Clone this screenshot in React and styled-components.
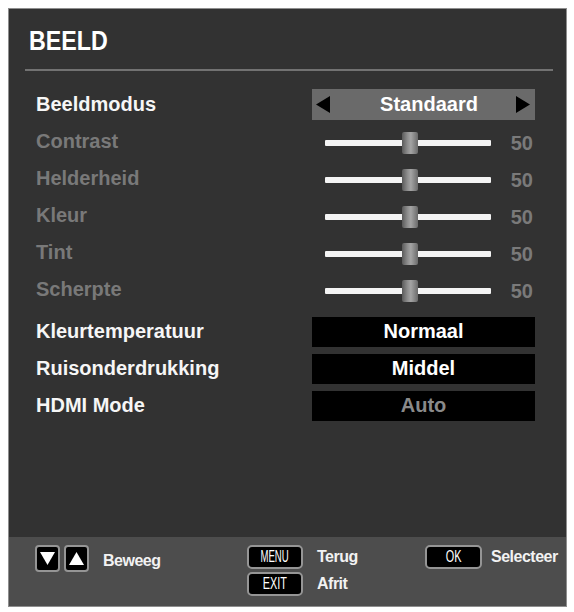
import styled, { createGlobalStyle } from 'styled-components';

const GlobalStyle = createGlobalStyle`
  html, body {
    margin: 0;
    padding: 0;
    background: #ffffff;
  }
  body {
    font-family: 'Liberation Sans', Arial, sans-serif;
  }
`;

const settings = [
  { id: 'mode', label: 'Beeldmodus', type: 'select', value: 'Standaard' },
  { id: 'contrast', label: 'Contrast', type: 'slider', value: 50, disabled: true },
  { id: 'helder', label: 'Helderheid', type: 'slider', value: 50, disabled: true },
  { id: 'kleur', label: 'Kleur', type: 'slider', value: 50, disabled: true },
  { id: 'tint', label: 'Tint', type: 'slider', value: 50, disabled: true },
  { id: 'scherpte', label: 'Scherpte', type: 'slider', value: 50, disabled: true },
  { id: 'temp', label: 'Kleurtemperatuur', type: 'box', value: 'Normaal', spaced: true },
  { id: 'ruis', label: 'Ruisonderdrukking', type: 'box', value: 'Middel' },
  { id: 'hdmi', label: 'HDMI Mode', type: 'box', value: 'Auto', dim: true },
];

const Arrow = ({ dir }) => (
  <svg width="14" height="17" viewBox="0 0 14 17">
    {dir === 'left' ? (
      <polygon points="14,0 14,17 0,8.5" fill="#000" />
    ) : (
      <polygon points="0,0 0,17 14,8.5" fill="#000" />
    )}
  </svg>
);

const NavTriangle = ({ up }) => (
  <svg width="15" height="13" viewBox="0 0 15 13">
    {up ? (
      <polygon points="7.5,0 15,13 0,13" fill="#fff" />
    ) : (
      <polygon points="0,0 15,0 7.5,13" fill="#fff" />
    )}
  </svg>
);

const SettingValue = ({ item }) => {
  if (item.type === 'select') {
    return (
      <St.SelectBox>
        <Arrow dir="left" />
        <St.SelectText>{item.value}</St.SelectText>
        <Arrow dir="right" />
      </St.SelectBox>
    );
  }
  if (item.type === 'slider') {
    return (
      <St.SliderCell>
        <St.Track>
          <St.Thumb style={{ left: `calc(${item.value}% - 6px)` }} />
        </St.Track>
        <St.SliderNumber>{item.value}</St.SliderNumber>
      </St.SliderCell>
    );
  }
  return <St.ValueBox dim={item.dim ? 1 : 0}>{item.value}</St.ValueBox>;
};

const App = () => {
  return (
    <>
      <GlobalStyle />
      <St.Panel>
        <St.Body>
          <St.Title>BEELD</St.Title>
          <St.Divider />
          <St.RowList>
            {settings.map(item => (
              <St.Row key={item.id} spaced={item.spaced ? 1 : 0}>
                <St.Label disabled={item.disabled}>{item.label}</St.Label>
                <St.ValueColumn>
                  <SettingValue item={item} />
                </St.ValueColumn>
              </St.Row>
            ))}
          </St.RowList>
        </St.Body>
        <St.Footer>
          <St.FooterGroup>
            <St.NavKey>
              <NavTriangle />
            </St.NavKey>
            <St.NavKey>
              <NavTriangle up />
            </St.NavKey>
            <St.HintText offset="4">Beweeg</St.HintText>
          </St.FooterGroup>
          <St.KeyStack>
            <St.FooterGroup>
              <St.KeyCap>
                <St.KeyText scale="0.6">MENU</St.KeyText>
              </St.KeyCap>
              <St.HintText>Terug</St.HintText>
            </St.FooterGroup>
            <St.FooterGroup>
              <St.KeyCap>
                <St.KeyText scale="0.68">EXIT</St.KeyText>
              </St.KeyCap>
              <St.HintText>Afrit</St.HintText>
            </St.FooterGroup>
          </St.KeyStack>
          <St.FooterGroup>
            <St.KeyCap wide>
              <St.KeyText scale="0.68">OK</St.KeyText>
            </St.KeyCap>
            <St.HintText narrow>Selecteer</St.HintText>
          </St.FooterGroup>
        </St.Footer>
      </St.Panel>
    </>
  );
};

const St = {
  Panel: styled.div`
    display: flex;
    flex-direction: column;
    box-sizing: border-box;

    width: 559px;
    height: 599px;
    margin: 8px 0 0 8px;
    border: 1px solid #8e8e8e;

    background: #323232;
  `,
  Body: styled.div`
    flex: 1;
    display: flex;
    flex-direction: column;
    padding-top: 16px;
  `,
  Title: styled.h1`
    margin: 0 0 0 20px;
    height: 32px;

    font-size: 28px;
    line-height: 32px;
    font-weight: 700;
    color: #ffffff;

    transform: scaleX(0.83);
    transform-origin: left center;
  `,
  Divider: styled.div`
    height: 2px;
    margin: 12px 13px 0 16px;
    background: #727272;
  `,
  RowList: styled.div`
    display: flex;
    flex-direction: column;
    margin-top: 15px;
    padding: 0 31px 0 27px;
  `,
  Row: styled.div`
    display: flex;
    align-items: center;
    justify-content: space-between;

    height: 37px;
    margin-top: ${props => (props.spaced ? '5px' : '0')};
  `,
  Label: styled.span`
    font-size: 20px;
    font-weight: 700;
    color: ${props => (props.disabled ? '#797979' : '#f6f6f6')};
  `,
  ValueColumn: styled.div`
    display: flex;
    align-items: center;
    width: 223px;
  `,
  SelectBox: styled.div`
    display: flex;
    align-items: center;
    justify-content: space-between;
    box-sizing: border-box;

    width: 100%;
    height: 31px;
    padding: 0 5px 0 4px;

    background: #6a6a6a;
  `,
  SelectText: styled.span`
    flex: 1;
    padding-left: 12px;

    text-align: center;
    font-size: 20px;
    font-weight: 700;
    color: #ffffff;
  `,
  SliderCell: styled.div`
    display: flex;
    align-items: center;
    width: 100%;
    padding-top: 3px;
  `,
  Track: styled.div`
    position: relative;

    width: 166px;
    height: 6px;
    margin-left: 13px;
    border-radius: 1px;

    background: #f4f4f4;
  `,
  Thumb: styled.div`
    position: absolute;
    top: -8px;

    width: 16px;
    height: 22px;
    border-radius: 2px;

    background: linear-gradient(to right, #5a5a5a 0%, #8e8e8e 35%, #a4a4a4 55%, #6a6a6a 100%);
  `,
  SliderNumber: styled.span`
    flex: 1;
    padding-right: 2px;

    text-align: right;
    font-size: 20px;
    font-weight: 700;
    color: #7a7a7a;
  `,
  ValueBox: styled.div`
    display: flex;
    align-items: center;
    justify-content: center;

    width: 100%;
    height: 30px;

    background: #000000;
    font-size: 20px;
    font-weight: 700;
    color: ${props => (props.dim ? '#8a8a8a' : '#ffffff')};
  `,
  Footer: styled.div`
    display: grid;
    grid-template-columns: 212px 178px 1fr;
    align-items: start;

    height: 69px;
    padding: 8px 0 0 26px;
    box-sizing: border-box;

    background: #4d4d4d;
  `,
  FooterGroup: styled.div`
    display: flex;
    align-items: center;
    gap: 4px;
  `,
  KeyStack: styled.div`
    display: flex;
    flex-direction: column;
    gap: 3px;
  `,
  NavKey: styled.div`
    display: flex;
    align-items: center;
    justify-content: center;
    box-sizing: border-box;

    width: 25px;
    height: 27px;
    border: 2px solid #959595;
    border-radius: 4px;

    background: #000000;
  `,
  KeyCap: styled.div`
    display: flex;
    align-items: center;
    justify-content: center;
    box-sizing: border-box;

    width: ${props => (props.wide ? '57px' : '56px')};
    height: 24px;
    border: 2px solid #959595;
    border-radius: 5px;

    background: #000000;
  `,
  KeyText: styled.span`
    display: inline-block;

    font-size: 16px;
    font-weight: 400;
    color: #ffffff;

    transform: scaleX(${props => props.scale});
  `,
  HintText: styled.span`
    margin-left: ${props => (props.narrow ? '5px' : '10px')};
    padding-top: ${props => props.offset || 0}px;

    font-size: 16px;
    font-weight: 700;
    letter-spacing: -0.5px;
    color: #f2f2f2;
  `,
};

export default App;
